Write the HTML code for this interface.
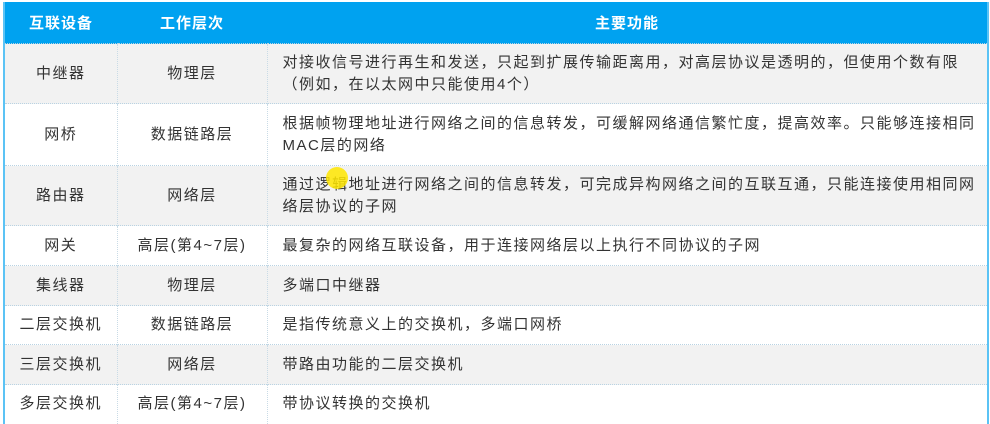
<!DOCTYPE html>
<html><head><meta charset="utf-8"><style>
body{margin:0;width:990px;height:423px;background:#fff;overflow:hidden;position:relative;font-family:"Liberation Sans","Noto Sans CJK SC",sans-serif;}
table{position:absolute;left:3px;top:2px;width:986px;border-collapse:collapse;table-layout:fixed;border-left:2px solid #5bc3f5;border-right:2px solid #5bc3f5;}
th{background:#00a2f0;color:#fff;font-size:15px;font-weight:bold;height:41px;padding:0;letter-spacing:1px;}
td{font-size:15px;letter-spacing:1.5px;color:#333;border-top:1px dotted #b9d3e3;border-left:1px dotted #c9dbe6;padding:0;text-align:center;line-height:22px;white-space:nowrap;}
td:first-child{border-left:none}
td.f{text-align:left;padding-left:15px;padding-right:0;}
tr.g td{background:#f2f2f2}
.dot{position:absolute;left:326px;top:167px;width:22px;height:22px;border-radius:50%;background:rgba(255,230,0,0.85);}
</style></head><body>
<table>
<colgroup><col style="width:113px"><col style="width:150px"><col></colgroup>
<tr><th>互联设备</th><th>工作层次</th><th>主要功能</th></tr>
<tr class="g" style="height:60px"><td>中继器</td><td>物理层</td><td class="f">对接收信号进行再生和发送，只起到扩展传输距离用，对高层协议是透明的，但使用个数有限<br>（例如，在以太网中只能使用4个）</td></tr>
<tr style="height:62px"><td>网桥</td><td>数据链路层</td><td class="f">根据帧物理地址进行网络之间的信息转发，可缓解网络通信繁忙度，提高效率。只能够连接相同<br>MAC层的网络</td></tr>
<tr class="g" style="height:60px"><td>路由器</td><td>网络层</td><td class="f">通过逻辑地址进行网络之间的信息转发，可完成异构网络之间的互联互通，只能连接使用相同网<br>络层协议的子网</td></tr>
<tr style="height:40px"><td>网关</td><td>高层(第4~7层)</td><td class="f">最复杂的网络互联设备，用于连接网络层以上执行不同协议的子网</td></tr>
<tr class="g" style="height:40px"><td>集线器</td><td>物理层</td><td class="f">多端口中继器</td></tr>
<tr style="height:39px"><td>二层交换机</td><td>数据链路层</td><td class="f">是指传统意义上的交换机，多端口网桥</td></tr>
<tr class="g" style="height:40px"><td>三层交换机</td><td>网络层</td><td class="f">带路由功能的二层交换机</td></tr>
<tr style="height:39px"><td>多层交换机</td><td>高层(第4~7层)</td><td class="f">带协议转换的交换机</td></tr>
</table>
<div class="dot"></div>
</body></html>
